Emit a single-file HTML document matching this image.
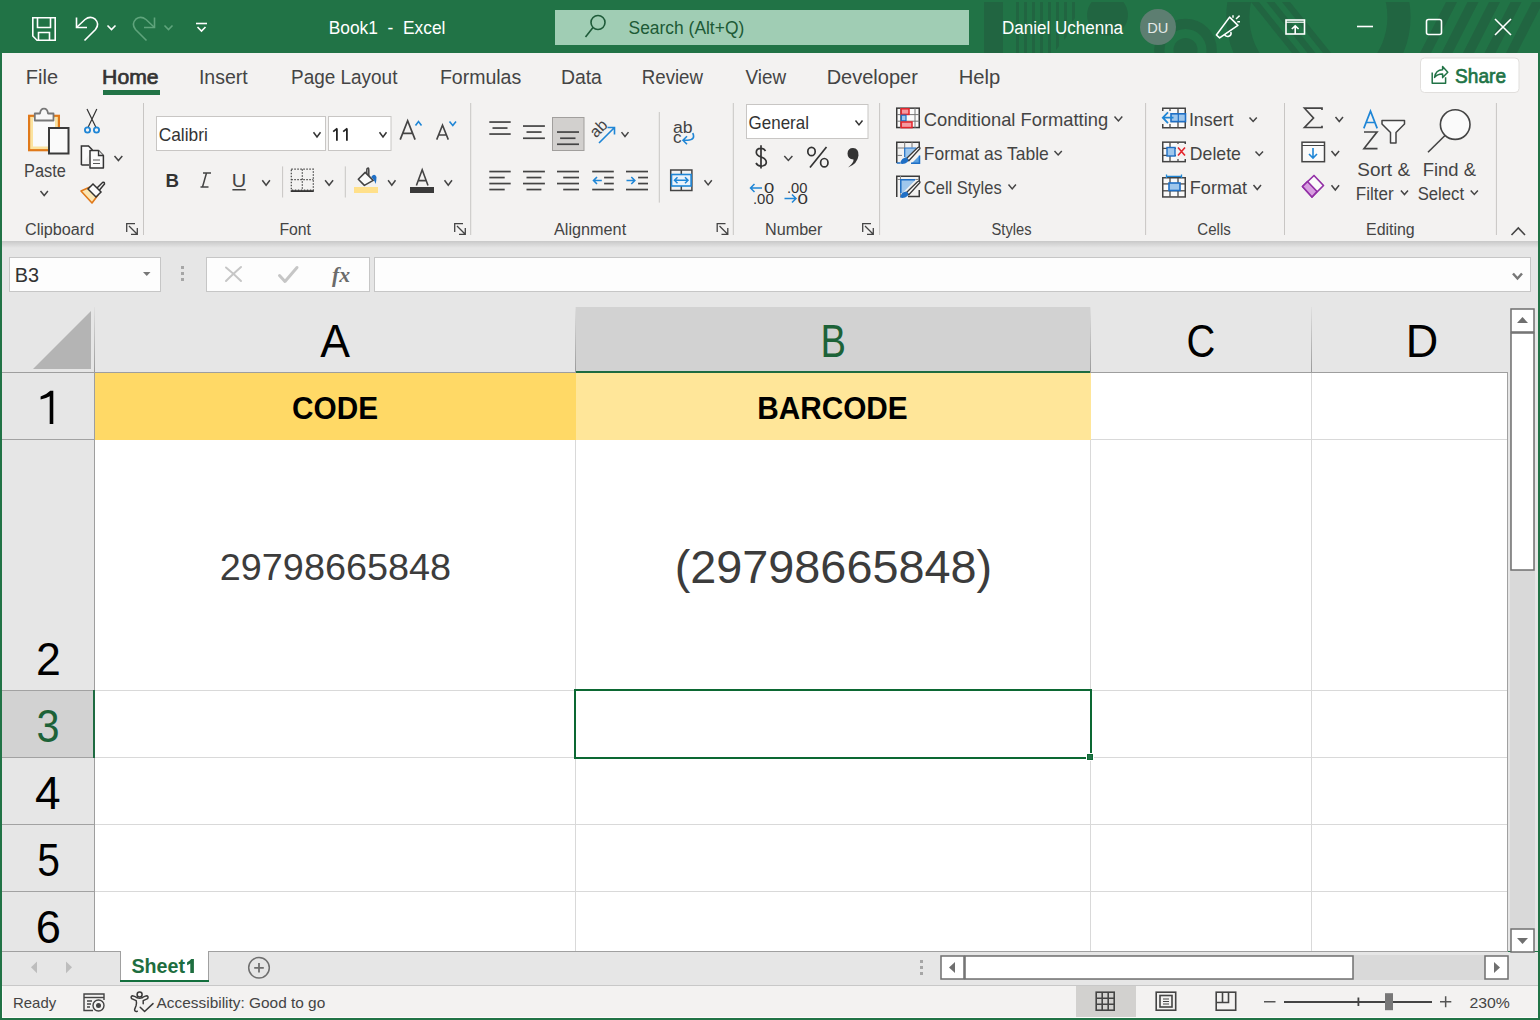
<!DOCTYPE html><html><head><meta charset="utf-8"><style>html,body{margin:0;padding:0;width:1540px;height:1020px;overflow:hidden;background:#217346}svg{display:block;font-family:"Liberation Sans",sans-serif}</style></head><body><svg width="1540" height="1020" viewBox="0 0 1540 1020"><rect x="0" y="0" width="1540" height="1020" fill="#217346"/>
<rect x="2" y="53" width="1536" height="188" fill="#f3f2f1"/>
<defs><linearGradient id="shd" x1="0" y1="0" x2="0" y2="1"><stop offset="0" stop-color="#c8c8c8"/><stop offset="1" stop-color="#e6e6e6"/></linearGradient><linearGradient id="hsep" x1="0" y1="0" x2="0" y2="1"><stop offset="0" stop-color="#e0e0e0"/><stop offset="1" stop-color="#9a9a9a"/></linearGradient></defs>
<rect x="2" y="241" width="1536" height="66" fill="#e6e6e6"/>
<rect x="2" y="241" width="1536" height="7" fill="url(#shd)"/>
<defs><clipPath id="tclip"><rect x="0" y="2" width="1540" height="51"/></clipPath><clipPath id="sclip"><circle cx="1318.4" cy="17" r="69"/></clipPath></defs>
<g fill="#216541" clip-path="url(#tclip)">
  <rect x="984" y="2" width="19" height="51"/>
  <rect x="1016" y="2" width="3" height="51"/><rect x="1024" y="2" width="3" height="51"/><rect x="1032" y="2" width="3" height="51"/><rect x="1040" y="2" width="3" height="51"/><rect x="1048" y="2" width="3" height="51"/><path d="M1056 2 H1059 V46 L1056 50 Z"/><path d="M1064 2 H1067 V36 L1064 40 Z"/><path d="M1072 2 H1075 V18 L1072 22 Z"/>
  <circle cx="1107.5" cy="15" r="20.5"/>
  <path fill-rule="evenodd" d="M1154.2 50 A31.3 31.3 0 1 1 1216.8 50 A31.3 31.3 0 1 1 1154.2 50 Z M1164.5 50 A21 21 0 1 0 1206.5 50 A21 21 0 1 0 1164.5 50 Z"/>
  <circle cx="1185.5" cy="50" r="12"/>
  <path fill-rule="evenodd" d="M1226.2 17 A92.2 92.2 0 1 1 1410.6 17 A92.2 92.2 0 1 1 1226.2 17 Z M1249.4 17 A69 69 0 1 0 1387.4 17 A69 69 0 1 0 1249.4 17 Z"/>
  <g clip-path="url(#sclip)"><path d="M1251 2 H1259 L1300 53 H1292 Z"/><path d="M1266.5 2 H1274.5 L1315.5 53 H1307.5 Z"/><path d="M1282 2 H1290 L1331 53 H1323 Z"/></g>
  <path d="M1446 2 H1457 L1431 53 H1420 Z"/><path d="M1467.5 2 H1478.5 L1452.5 53 H1441.5 Z"/><path d="M1489 2 H1500 L1474 53 H1463 Z"/><path d="M1510.5 2 H1521.5 L1495.5 53 H1484.5 Z"/><path d="M1532 2 H1543 L1517 53 H1506 Z"/>
 </g>
 <g fill="none" stroke="#fff" stroke-width="1.6">
  <path d="M32.8 17.8 H55.2 V40.2 H37 L32.8 36 Z"/>
  <path d="M37.5 17.8 V27.5 H50.5 V17.8"/>
  <path d="M38.5 40.2 V32.5 H49.5 V40.2"/>
  <path d="M76.5 17.5 V27.5 H87"/>
  <path d="M77 27 L85 19.5 Q90 15.5 95 19 Q100 24 95.5 29.5 L84.5 40.5"/>
  <path d="M107.5 25.5 L111.5 29.5 L115.5 25.5"/>
  <path d="M196 23.5 H207"/><path d="M197.5 27 L201.5 31 L205.5 27"/>
 </g>
 <g fill="none" stroke="#5fa47c" stroke-width="1.6">
  <path d="M154.5 17.5 V27.5 H144"/>
  <path d="M154 27 L146 19.5 Q141 15.5 136 19 Q131 24 135.5 29.5 L146.5 40.5"/>
  <path d="M164.5 25.5 L168.5 29.5 L172.5 25.5"/>
 </g>
 <rect x="555" y="10" width="414" height="35" fill="#a0cdb4"/>
 <g fill="none" stroke="#1e5a39" stroke-width="1.6">
  <circle cx="598" cy="22.5" r="7"/><path d="M593 27.5 L585.5 37"/>
 </g>
 <circle cx="1158" cy="27" r="18" fill="#5d7e71"/>
 <g fill="none" stroke="#fff" stroke-width="1.6">
  <path d="M1216.4 35 L1229.6 17.1 L1237.9 25.4 L1219.6 37.9 Z" stroke-linejoin="round"/>
  <path d="M1224.5 34.2 A3.2 3.2 0 0 0 1230.8 32" />
  <path d="M1233 15.2 V17.8 M1236 19 L1239.6 15.6 M1237.3 21.8 H1240" stroke-width="1.5"/>
  <rect x="1286" y="20" width="18.5" height="14"/>
  <path d="M1286 22.2 H1304.5" stroke-width="1.2"/><path d="M1295.2 34 V25.8 M1291.8 29 L1295.2 25.8 L1298.6 29"/>
  <path d="M1357 26.5 H1373"/>
  <rect x="1426.5" y="19.5" width="15" height="15" rx="2"/>
  <path d="M1495 19 L1511 35 M1511 19 L1495 35"/>
 </g>
<rect x="103" y="90" width="57" height="5" fill="#217346"/>
<rect x="1420.5" y="58" width="98.5" height="34.5" rx="4" fill="#ffffff" stroke="#e1dfdd" stroke-width="1"/>
<g fill="none" stroke="#217346" stroke-width="1.5" stroke-linejoin="round"><path d="M1432.2 72.6 V83.2 H1445.6 V77.3"/><path d="M1434.6 77.4 Q1435.5 70 1442.6 69.8 V66.4 L1447.8 72.2 L1442.6 77.6 V74 Q1437.5 73.8 1434.6 77.4 Z"/></g>
<rect x="29.1" y="115.8" width="29.8" height="34.4" fill="#fbe3a0" stroke="#e0791a" stroke-width="2.2"/>
<rect x="33" y="118" width="22" height="28.5" fill="#fafafa"/>
<path d="M34.8 120.5 V113.5 H40 Q40.5 108.6 44 108.6 Q47.5 108.6 48 113.5 H53.5 V120.5 Z" fill="#f7f7f7" stroke="#777" stroke-width="1.8" stroke-linejoin="round"/>
<rect x="49" y="128" width="19.5" height="25.5" fill="#fafafa" stroke="#3a3a3a" stroke-width="2"/>
<path d="M40.5 191.1 L44.2 195.5 L47.9 191.1" fill="none" stroke="#444" stroke-width="1.5"/>
<g fill="none" stroke="#333" stroke-width="1.2"><path d="M87 109 L96 127.5 M96.8 109 L88 127.5"/></g>
<g fill="none" stroke="#1f86d6" stroke-width="1.8"><circle cx="87.5" cy="130" r="2.6"/><circle cx="96.5" cy="130" r="2.6"/></g>
<path d="M81.4 165 V146 H88.5 L92.5 150" fill="#fafafa" stroke="#333" stroke-width="1.5"/>
<path d="M81.4 165 H89" fill="none" stroke="#333" stroke-width="1.5"/>
<path d="M90 168.1 V150.6 H98.5 L103.4 155.5 V168.1 Z" fill="#fafafa" stroke="#333" stroke-width="1.5" stroke-linejoin="round"/>
<path d="M98.5 150.6 V155.5 H103.4" fill="#e0e0e0" stroke="#333" stroke-width="1.3"/>
<path d="M93 160 H100 M93 163.5 H100" stroke="#555" stroke-width="1.1"/>
<path d="M114.5 156.1 L118.4 160.5 L122.3 156.1" fill="none" stroke="#444" stroke-width="1.5"/>
<path d="M81 191 L90 187 L98 195 L92 203 Z" fill="#fbe7b4" stroke="#e0791a" stroke-width="1.6" stroke-linejoin="round"/>
<path d="M88 189 L96 197 L101 192 L93 184 Z" fill="#fafafa" stroke="#333" stroke-width="1.5"/>
<path d="M97 188 L102.5 182.5 Q104.5 181.5 104.5 184 L99.5 190" fill="none" stroke="#333" stroke-width="1.5"/>
<g fill="none" stroke="#444" stroke-width="1.3"><path d="M126.7 232 V223.7 H135"/><path d="M129 226 L137 234 M131 234.3 H137.3 V228"/></g>
<rect x="143.0" y="103" width="1" height="132" fill="#c8c6c4"/>
<rect x="156.5" y="116.5" width="169" height="34" fill="#fff" stroke="#c8c6c4"/>
<path d="M313.5 132.2 L317.0 137.0 L320.5 132.2" fill="none" stroke="#333" stroke-width="1.5"/>
<rect x="328.5" y="116.5" width="62.5" height="34" fill="#fff" stroke="#c8c6c4"/>
<g fill="none" stroke="#222" stroke-width="1.8"><path d="M336.9 128.6 V140.8 M333.2 131.6 L337.3 128.4"/><path d="M346.9 128.6 V140.8 M343.2 131.6 L347.3 128.4"/></g>
<path d="M379.5 132.2 L383.0 137.0 L386.5 132.2" fill="none" stroke="#333" stroke-width="1.5"/>
<path d="M400.2 139.6 L407.65 120.8 L415.1 139.6 M402.6 133.4 H412.7" fill="none" stroke="#444" stroke-width="1.7"/>
<path d="M415.5 125.5 L418.5 121.5 L421.5 125.5" fill="none" stroke="#1f86d6" stroke-width="1.6"/>
<path d="M436.7 139.6 L442.5 125.2 L448.3 139.6 M438.8 135 H446.2" fill="none" stroke="#444" stroke-width="1.6"/>
<path d="M449.5 121.5 L452.8 125.5 L456 121.5" fill="none" stroke="#1f86d6" stroke-width="1.6"/>
<path d="M206.5 173 L202.5 187 M203 173 H211 M200.5 187 H208.5" fill="none" stroke="#444" stroke-width="1.5"/>
<rect x="232.4" y="189" width="13.3" height="1.5" fill="#444"/>
<path d="M262.3 180.2 L266.1 185.2 L269.9 180.2" fill="none" stroke="#444" stroke-width="1.5"/>
<rect x="282.1" y="166.4" width="1" height="31.099999999999994" fill="#c8c6c4"/>
<g fill="none" stroke="#444" stroke-width="1.2" stroke-dasharray="1.5 1.5"><rect x="291.3" y="169.2" width="22" height="21"/><path d="M302.3 169.2 V190.2 M291.3 179.7 H313.3"/></g>
<rect x="290.7" y="190.2" width="23.1" height="1.8" fill="#333"/>
<path d="M325.1 180.2 L329.1 185.2 L333.1 180.2" fill="none" stroke="#444" stroke-width="1.5"/>
<rect x="344.8" y="166.4" width="1" height="31.099999999999994" fill="#c8c6c4"/>
<path d="M358.3 179.3 L365.2 172.4 L373.2 180.4 L364.4 185.4 Z" fill="#fafafa" stroke="#444" stroke-width="1.6" stroke-linejoin="round"/>
<path d="M366.8 174 V170 Q366.8 168 368.5 168 Q368.8 168 368.8 170 V176" fill="none" stroke="#444" stroke-width="1.5"/>
<path d="M371.5 176.5 Q374.5 173 376.5 177 Q376.5 181 375.5 184 Q374.2 179 371.5 177.5 Z" fill="#1f6fc5"/>
<rect x="354" y="187" width="24" height="6" fill="#ffe08a"/>
<path d="M388.1 180.2 L391.8 185.2 L395.5 180.2" fill="none" stroke="#444" stroke-width="1.5"/>
<path d="M416.4 185.5 L422.2 169.7 L428 185.5 M418.5 180.6 H425.9" fill="none" stroke="#444" stroke-width="1.6"/>
<rect x="410" y="187" width="24" height="6" fill="#3a3a3a"/>
<path d="M444.5 180.2 L448.25 185.2 L452.0 180.2" fill="none" stroke="#444" stroke-width="1.5"/>
<g fill="none" stroke="#444" stroke-width="1.3"><path d="M454.7 232 V223.7 H463"/><path d="M457 226 L465 234 M459 234.3 H465.3 V228"/></g>
<rect x="470.2" y="103" width="1" height="132" fill="#c8c6c4"/>
<rect x="552.5" y="117.5" width="31.5" height="33" fill="#d2d0ce" stroke="#a19f9d"/>
<rect x="489.3" y="121.2" width="21.4" height="1.7" fill="#444"/>
<rect x="492.5" y="127.2" width="15.0" height="1.7" fill="#444"/>
<rect x="489.3" y="133.2" width="21.4" height="1.7" fill="#444"/>
<rect x="523.0" y="125.2" width="21.9" height="1.7" fill="#444"/>
<rect x="526.5" y="131.2" width="15.1" height="1.7" fill="#444"/>
<rect x="523.0" y="137.39999999999998" width="21.9" height="1.7" fill="#444"/>
<rect x="557.0" y="131.2" width="22.0" height="1.7" fill="#444"/>
<rect x="560.1" y="137.39999999999998" width="15.4" height="1.7" fill="#444"/>
<rect x="557.0" y="143.39999999999998" width="22.0" height="1.7" fill="#444"/>
<rect x="489.3" y="170.7" width="21.4" height="1.7" fill="#444"/>
<rect x="489.3" y="176.7" width="15.4" height="1.7" fill="#444"/>
<rect x="489.3" y="182.7" width="21.4" height="1.7" fill="#444"/>
<rect x="489.3" y="188.7" width="15.4" height="1.7" fill="#444"/>
<rect x="523.0" y="170.7" width="21.9" height="1.7" fill="#444"/>
<rect x="526.5" y="176.7" width="14.9" height="1.7" fill="#444"/>
<rect x="523.0" y="182.7" width="21.9" height="1.7" fill="#444"/>
<rect x="526.5" y="188.7" width="14.9" height="1.7" fill="#444"/>
<rect x="557.0" y="170.7" width="22.0" height="1.7" fill="#444"/>
<rect x="563.2" y="176.7" width="15.8" height="1.7" fill="#444"/>
<rect x="557.0" y="182.7" width="22.0" height="1.7" fill="#444"/>
<rect x="563.2" y="188.7" width="15.8" height="1.7" fill="#444"/>
<rect x="592.2" y="170.7" width="21.6" height="1.7" fill="#444"/>
<rect x="604.1" y="176.7" width="9.7" height="1.7" fill="#444"/>
<rect x="604.1" y="182.7" width="9.7" height="1.7" fill="#444"/>
<rect x="592.2" y="188.7" width="21.6" height="1.7" fill="#444"/>
<rect x="626.0" y="170.7" width="22.0" height="1.7" fill="#444"/>
<rect x="638.1" y="176.7" width="9.9" height="1.7" fill="#444"/>
<rect x="638.1" y="182.7" width="9.9" height="1.7" fill="#444"/>
<rect x="626.0" y="188.7" width="22.0" height="1.7" fill="#444"/>
<g fill="none" stroke="#1f86d6" stroke-width="1.6"><path d="M601.8 180.5 H593.5 M597 177 L593.5 180.5 L597 184"/><path d="M626.5 180.5 H634.8 M631.3 177 L634.8 180.5 L631.3 184"/></g>
<text x="0" y="0" font-size="16" fill="#444" transform="translate(596 138.5) rotate(-45)">ab</text>
<g fill="none" stroke="#1f86d6" stroke-width="1.6"><path d="M599 143 L614 128 M607.5 127.5 H614.5 V134.5"/></g>
<path d="M621.5 132.1 L625.0 136.5 L628.5 132.1" fill="none" stroke="#444" stroke-width="1.5"/>
<rect x="658.8" y="112" width="1" height="90.6" fill="#c8c6c4"/>
<g fill="none" stroke="#1f86d6" stroke-width="1.6"><path d="M692.8 133 Q695.8 140 687.5 140.2 H683 M687 136.2 L683 140.2 L687 144.2"/></g>
<g fill="none" stroke="#444" stroke-width="1.5"><rect x="670.7" y="170" width="21.2" height="20.5"/><path d="M681.3 170 V175 M681.3 186 V190.5"/></g>
<rect x="671.5" y="174.5" width="19.6" height="11.5" fill="#eaf3fb" stroke="#1f86d6" stroke-width="1.6"/>
<g fill="none" stroke="#1f86d6" stroke-width="1.5"><path d="M674.5 180.2 H688 M677.5 177.2 L674.5 180.2 L677.5 183.2 M685 177.2 L688 180.2 L685 183.2"/></g>
<path d="M704.5 180.3 L708.15 184.9 L711.8 180.3" fill="none" stroke="#444" stroke-width="1.5"/>
<g fill="none" stroke="#444" stroke-width="1.3"><path d="M717.2 232 V223.7 H725.5"/><path d="M719.5 226 L727.5 234 M721.5 234.3 H727.8 V228"/></g>
<rect x="732.8" y="103" width="1" height="132" fill="#c8c6c4"/>
<rect x="746.5" y="104.5" width="121.5" height="34" fill="#fff" stroke="#c8c6c4"/>
<path d="M855.5 120.5 L859.0 124.9 L862.5 120.5" fill="none" stroke="#333" stroke-width="1.5"/>
<path d="M765.5 151 Q764 148.3 760.8 148.3 Q756.3 148.3 756.3 152.3 Q756.3 155.5 761 157 Q766.3 158.7 766.3 162.3 Q766.3 166 761 166 Q757.5 166 756 163 M761 145.3 V168.6" fill="none" stroke="#333" stroke-width="1.7"/>
<path d="M784.3 156.1 L788.3499999999999 160.5 L792.4 156.1" fill="none" stroke="#444" stroke-width="1.5"/>
<g fill="none" stroke="#333" stroke-width="1.7"><ellipse cx="811.5" cy="151.5" rx="3.7" ry="4.2"/><ellipse cx="824.3" cy="162.7" rx="3.7" ry="4.2"/><path d="M826.5 147 L810 167.5"/></g>
<path d="M853 148 Q858.8 148 858.5 155.5 Q857.5 164 848 167.5 Q854 162.5 853.5 159.5 Q847.5 159 847.5 153.5 Q847.8 148 853 148 Z" fill="#333"/>
<g fill="none" stroke="#1f86d6" stroke-width="1.5"><path d="M750.5 188 H762 M754.5 184 L750.5 188 L754.5 192"/></g>
<g fill="none" stroke="#1f86d6" stroke-width="1.5"><path d="M784.5 198.5 H796 M792 194.5 L796 198.5 L792 202.5"/></g>
<g fill="none" stroke="#444" stroke-width="1.3"><path d="M862.7 232 V223.7 H871"/><path d="M865 226 L873 234 M867 234.3 H873.3 V228"/></g>
<rect x="879.1" y="103" width="1" height="132" fill="#c8c6c4"/>
<rect x="896.75" y="108.15" width="22.5" height="19.4" fill="#fafafa" stroke="#3a3a3a" stroke-width="1.5"/>
<path d="M900.5 108 V128 M915 108 V128 M897 114.6 H919.5 M897 121.2 H919.5" stroke="#777" stroke-width="1"/>
<rect x="901.2" y="108.8" width="7.8" height="5.6" fill="#f59aa0" stroke="#e3242b" stroke-width="1.5"/>
<rect x="901.4" y="115.2" width="4.6" height="5.6" fill="#9fc7ec" stroke="#1f6fc5" stroke-width="1.2"/>
<rect x="901.2" y="122" width="10.8" height="5.6" fill="#f59aa0" stroke="#e3242b" stroke-width="1.5"/>
<path d="M1114.5 116.5 L1118.4 120.9 L1122.3 116.5" fill="none" stroke="#444" stroke-width="1.5"/>
<path d="M896.75 163 V142.25 H919.25 V147" fill="none" stroke="#3a3a3a" stroke-width="1.5"/>
<path d="M904.7 142 V149 M912 142 V147.5 M897 148 H904.7 M897 155.4 H902" stroke="#777" stroke-width="1"/>
<path d="M904.7 148 H917 L905 160 V163 H904.7 Z" fill="#9fc7ec"/>
<path d="M912 163 L919.5 155.5 V163 Z" fill="#5aa0e0"/>
<path d="M904.7 148 H916 M904.7 148 V157" stroke="#1f6fc5" stroke-width="1.2"/>
<path d="M896.75 163 H900 M919.5 155.5 V163.2 H911" fill="none" stroke="#1f6fc5" stroke-width="1.5"/>
<g transform="translate(0 0)"><path d="M906.5 158.5 L917.5 147.8 Q919.8 146.2 920 148.5 L908.8 160.8 Z" fill="#fafafa" stroke="#3a3a3a" stroke-width="1.3" stroke-linejoin="round"/><path d="M900 163.6 Q901.5 157.5 906.2 157.4 Q909.5 159.5 907.5 162 Q904.5 164.6 900 163.6 Z" fill="#1f6fc5"/></g>
<path d="M1054.5 151.0 L1058.15 155.0 L1061.8 151.0" fill="none" stroke="#444" stroke-width="1.5"/>
<path d="M896.75 197 V176.15 H919.25 V181 M919.25 190 V196.55 H908" fill="none" stroke="#3a3a3a" stroke-width="1.5"/>
<path d="M900.5 176 V197 M897 179.5 H919" stroke="#888" stroke-width="1"/>
<path d="M900.5 179.5 H916 L902 193.5 H900.5 Z" fill="#9fc7ec"/>
<path d="M900.8 193 V179.8 H915" fill="none" stroke="#1f6fc5" stroke-width="1.5"/>
<g transform="translate(0 34)"><path d="M906.5 158.5 L917.5 147.8 Q919.8 146.2 920 148.5 L908.8 160.8 Z" fill="#fafafa" stroke="#3a3a3a" stroke-width="1.3" stroke-linejoin="round"/><path d="M900 163.6 Q901.5 157.5 906.2 157.4 Q909.5 159.5 907.5 162 Q904.5 164.6 900 163.6 Z" fill="#1f6fc5"/></g>
<path d="M1008.5 184.5 L1012.2 188.9 L1015.9 184.5" fill="none" stroke="#444" stroke-width="1.5"/>
<rect x="1145.1" y="103" width="1" height="132" fill="#c8c6c4"/>
<rect x="1162.75" y="108.25" width="22.5" height="19.5" fill="#fafafa" stroke="#444" stroke-width="1.5"/>
<path d="M1170.0 108.5 V127.5" stroke="#4a4a4a" stroke-width="1.3"/>
<path d="M1163 114.5 H1185" stroke="#4a4a4a" stroke-width="1.3"/>
<path d="M1178.0 108.5 V127.5" stroke="#4a4a4a" stroke-width="1.3"/>
<path d="M1163 121.5 H1185" stroke="#4a4a4a" stroke-width="1.3"/>
<rect x="1161" y="111" width="10" height="13" fill="#f3f2f1"/>
<rect x="1171" y="113.8" width="14.5" height="7.8" fill="#9fc7ec" stroke="#1f6fc5" stroke-width="1.6"/>
<path d="M1178.3 113.8 V121.6" stroke="#1f6fc5" stroke-width="1.2"/>
<g fill="none" stroke="#1f86d6" stroke-width="1.8"><path d="M1173.5 117.7 H1163 M1168 112.3 L1162.8 117.7 L1168 123.1"/></g>
<path d="M1249.5 117.5 L1253.15 121.5 L1256.8 117.5" fill="none" stroke="#444" stroke-width="1.5"/>
<rect x="1162.75" y="142.15" width="22.5" height="19.5" fill="#fafafa" stroke="#444" stroke-width="1.5"/>
<path d="M1170.0 142.4 V161.4" stroke="#4a4a4a" stroke-width="1.3"/>
<path d="M1163 148.4 H1185" stroke="#4a4a4a" stroke-width="1.3"/>
<path d="M1178.0 142.4 V161.4" stroke="#4a4a4a" stroke-width="1.3"/>
<path d="M1163 155.4 H1185" stroke="#4a4a4a" stroke-width="1.3"/>
<rect x="1167" y="147.5" width="8" height="8.5" fill="#9fc7ec" stroke="#1f6fc5" stroke-width="1.4"/>
<rect x="1176" y="144" width="10" height="15" fill="#f3f2f1"/>
<g fill="none" stroke="#e3242b" stroke-width="1.6"><path d="M1178 147.5 L1185 155.5 M1185 147.5 L1178 155.5"/></g>
<path d="M1255.5 151.5 L1259.25 155.5 L1263.0 151.5" fill="none" stroke="#444" stroke-width="1.5"/>
<rect x="1162.75" y="177.75" width="22.5" height="19.2" fill="#fafafa" stroke="#444" stroke-width="1.5"/>
<path d="M1170.0 178 V196.7" stroke="#4a4a4a" stroke-width="1.3"/>
<path d="M1163 183.9 H1185" stroke="#4a4a4a" stroke-width="1.3"/>
<path d="M1178.0 178 V196.7" stroke="#4a4a4a" stroke-width="1.3"/>
<path d="M1163 190.8 H1185" stroke="#4a4a4a" stroke-width="1.3"/>
<rect x="1169" y="183" width="11" height="7.5" fill="#9fc7ec" stroke="#1f6fc5" stroke-width="1.6"/>
<g fill="none" stroke="#1f86d6" stroke-width="1.3"><path d="M1166.5 174.5 V178 M1181.5 174.5 V178 M1166.5 176.3 H1181.5"/></g>
<path d="M1253.5 185.0 L1257.25 189.5 L1261.0 185.0" fill="none" stroke="#444" stroke-width="1.5"/>
<rect x="1284.0" y="103" width="1" height="132" fill="#c8c6c4"/>
<path d="M1322 110 V108.2 H1304.5 L1313.5 118 L1304.5 127.5 H1322 V125.8" fill="none" stroke="#444" stroke-width="1.7"/>
<path d="M1335.5 117.0 L1339.25 121.5 L1343.0 117.0" fill="none" stroke="#444" stroke-width="1.5"/>
<rect x="1302" y="142.2" width="22.5" height="19.5" fill="#fafafa" stroke="#444" stroke-width="1.5"/>
<path d="M1302 145.5 H1324.5" stroke="#444" stroke-width="1"/>
<g fill="none" stroke="#1f86d6" stroke-width="1.6"><path d="M1313 148 V158 M1309 154 L1313 158 L1317 154"/></g>
<path d="M1331.5 150.9 L1335.3 155.5 L1339.1 150.9" fill="none" stroke="#444" stroke-width="1.5"/>
<path d="M1302.5 186.5 L1314 175.5 L1323.5 185.5 L1312 197 Z" fill="#fafafa" stroke="#922fa6" stroke-width="1.7" stroke-linejoin="round"/>
<path d="M1302.5 186.5 L1307.5 181.5 L1317 191.5 L1312 197 Z" fill="#d79ee0" stroke="#922fa6" stroke-width="1.7" stroke-linejoin="round"/>
<path d="M1331.5 185.3 L1335.3 190.0 L1339.1 185.3" fill="none" stroke="#444" stroke-width="1.5"/>
<path d="M1363.8 128.4 L1370.5 111.2 L1377.2 128.4 M1366 122.5 H1375" fill="none" stroke="#1f86d6" stroke-width="1.7"/>
<path d="M1364 132 H1377 L1364 148.6 H1377.5" fill="none" stroke="#444" stroke-width="1.7"/>
<path d="M1382 120.5 H1404.5 V124 L1396 132.5 V143 H1390.5 V132.5 L1382 124 Z" fill="#fafafa" stroke="#444" stroke-width="1.5" stroke-linejoin="round"/>
<path d="M1400.9 190.5 L1404.45 194.5 L1408.0 190.5" fill="none" stroke="#444" stroke-width="1.5"/>
<circle cx="1455.2" cy="124.6" r="14.8" fill="#fafafa" stroke="#444" stroke-width="1.6"/>
<path d="M1445 135.5 L1428 152.3" stroke="#444" stroke-width="1.6"/>
<path d="M1470.7 190.5 L1474.3000000000002 194.5 L1477.9 190.5" fill="none" stroke="#444" stroke-width="1.5"/>
<rect x="1495.9" y="103" width="1" height="132" fill="#c8c6c4"/>
<path d="M1511.5 235 L1518.3 228 L1525 235" fill="none" stroke="#444" stroke-width="1.6"/>
<rect x="9.5" y="257.5" width="151" height="34" fill="#fdfdfd" stroke="#c6c6c6"/>
<path d="M143 272 H150.5 L146.75 276 Z" fill="#777"/>
<g fill="#a6a6a6"><rect x="181" y="266" width="3" height="3"/><rect x="181" y="272" width="3" height="3"/><rect x="181" y="278" width="3" height="3"/></g>
<rect x="206.5" y="257.5" width="163" height="34" fill="#fdfdfd" stroke="#c6c6c6"/>
<g fill="none" stroke="#c6c6c6" stroke-width="2" stroke-linecap="round"><path d="M226 267.5 Q234 274 241 281 M241 267 Q232 275 226 281"/></g>
<path d="M279.5 275.5 L285 281.5 L297 267.5" fill="none" stroke="#c6c6c6" stroke-width="3" stroke-linejoin="round" stroke-linecap="round"/>
<text x="332" y="281.5" font-family="Liberation Serif" font-style="italic" font-weight="bold" font-size="20" fill="#6b6b6b" textLength="18" lengthAdjust="spacingAndGlyphs">fx</text>
<rect x="374.5" y="257.5" width="1156" height="34" fill="#fdfdfd" stroke="#c6c6c6"/>
<path d="M1513 273.5 L1517.5 278.5 L1522 273.5" fill="none" stroke="#777" stroke-width="2.5"/>
<rect x="2" y="307" width="1536" height="644" fill="#e6e6e6"/>
<rect x="95" y="373" width="1412" height="578" fill="#ffffff"/>
<path d="M91 311 V369 H33 Z" fill="#b4b4b4"/>
<rect x="576" y="307" width="514" height="65" fill="#d2d2d2"/>
<rect x="94" y="307" width="1" height="65" fill="url(#hsep)"/>
<rect x="575" y="307" width="1" height="65" fill="url(#hsep)"/>
<rect x="1090" y="307" width="1" height="65" fill="url(#hsep)"/>
<rect x="1311" y="307" width="1" height="65" fill="url(#hsep)"/>
<rect x="2" y="372" width="1505" height="1" fill="#9e9e9e"/>
<rect x="576" y="371" width="514" height="2" fill="#1e6b41"/>
<rect x="94" y="372" width="1" height="579" fill="#9e9e9e"/>
<rect x="2" y="690" width="92" height="67" fill="#d2d2d2"/>
<rect x="2" y="439" width="92" height="1" fill="#a2a2a2"/>
<rect x="2" y="690" width="92" height="1" fill="#a2a2a2"/>
<rect x="2" y="757" width="92" height="1" fill="#a2a2a2"/>
<rect x="2" y="824" width="92" height="1" fill="#a2a2a2"/>
<rect x="2" y="891" width="92" height="1" fill="#a2a2a2"/>
<rect x="93" y="690" width="2" height="68" fill="#1e6b41"/>
<rect x="95" y="439" width="1412" height="1" fill="#d9d9d9"/>
<rect x="95" y="690" width="1412" height="1" fill="#d9d9d9"/>
<rect x="95" y="757" width="1412" height="1" fill="#d9d9d9"/>
<rect x="95" y="824" width="1412" height="1" fill="#d9d9d9"/>
<rect x="95" y="891" width="1412" height="1" fill="#d9d9d9"/>
<rect x="575" y="373" width="1" height="578" fill="#d9d9d9"/>
<rect x="1090" y="373" width="1" height="578" fill="#d9d9d9"/>
<rect x="1311" y="373" width="1" height="578" fill="#d9d9d9"/>
<rect x="95" y="373" width="481" height="67" fill="#ffd966"/>
<rect x="576" y="373" width="515" height="67" fill="#ffe699"/>
<rect x="1507" y="372" width="1" height="580" fill="#a0a0a0"/>
<rect x="2" y="951" width="1506" height="1" fill="#a0a0a0"/>
<rect x="575" y="690" width="516" height="68" fill="none" stroke="#0c6833" stroke-width="2"/>
<rect x="1086" y="753" width="8" height="8" fill="#ffffff"/>
<rect x="1087.5" y="754.5" width="5" height="5" fill="#217346" stroke="#0c6833" stroke-width="1"/>
<path d="M53.3 390.8 V424 H49.7 V396.2 Q45.5 398.6 40.6 399.6 V396.6 Q46.5 394.6 50.3 390.8 Z" fill="#000"/>
<rect x="2" y="952" width="1536" height="33" fill="#e6e6e6"/>
<path d="M37 961.5 V973.2 L31 967.35 Z" fill="#bdbdbd"/>
<path d="M66 961.5 V973.2 L72 967.35 Z" fill="#bdbdbd"/>
<rect x="120" y="951" width="88.5" height="29" fill="#ffffff"/>
<rect x="120" y="951" width="1" height="30" fill="#a0a0a0"/><rect x="208" y="951" width="1" height="30" fill="#a0a0a0"/>
<rect x="120" y="980" width="89" height="2" fill="#136f3d"/>
<path d="M193.9 959 V972.9 H190.3 V963.6 Q188.8 964.6 187.1 965.2 V962.2 Q189.8 961 191.2 959 Z" fill="#1e6e40"/>
<circle cx="259" cy="967.8" r="10.3" fill="none" stroke="#6f6f6f" stroke-width="1.5"/>
<path d="M259 963 V972.6 M254.2 967.8 H263.8" stroke="#6f6f6f" stroke-width="1.8"/>
<g fill="#a6a6a6"><rect x="920" y="960" width="3" height="3"/><rect x="920" y="966" width="3" height="3"/><rect x="920" y="972" width="3" height="3"/></g>
<rect x="964" y="955" width="521" height="25" fill="#d9d9d9"/>
<rect x="941" y="956" width="23" height="23" fill="#fff" stroke="#6f6f6f" stroke-width="1.5"/>
<path d="M955 962 V973 L949 967.5 Z" fill="#6f6f6f"/>
<rect x="965" y="956" width="388" height="23" fill="#fff" stroke="#6f6f6f" stroke-width="1.5"/>
<rect x="1485" y="956" width="23" height="23" fill="#fff" stroke="#6f6f6f" stroke-width="1.5"/>
<path d="M1494 962 V973 L1500 967.5 Z" fill="#6f6f6f"/>
<rect x="1510" y="333" width="25" height="595" fill="#d9d9d9"/>
<rect x="1511" y="309" width="23" height="23" fill="#fff" stroke="#6f6f6f" stroke-width="1.5"/>
<path d="M1517 323 H1528 L1522.5 317 Z" fill="#6f6f6f"/>
<rect x="1511" y="333" width="23" height="237" fill="#fff" stroke="#6f6f6f" stroke-width="1.5"/>
<rect x="1511" y="929" width="23" height="23" fill="#fff" stroke="#6f6f6f" stroke-width="1.5"/>
<path d="M1517 938 H1528 L1522.5 944 Z" fill="#6f6f6f"/>
<rect x="2" y="985" width="1536" height="33" fill="#f3f2f1"/>
<rect x="2" y="1017" width="1536" height="1" fill="#fdfbfb"/><rect x="2" y="986" width="1" height="31" fill="#fdfbfb"/>
<rect x="2" y="985" width="1536" height="1" fill="#c8c8c8"/>
<g fill="none" stroke="#444" stroke-width="1.4"><path d="M93 1010.5 H84 V994 H104 V1000"/><path d="M84 997.5 H104"/><path d="M87 1001 H92 M87 1004 H91 M87 1007 H90"/><circle cx="98.5" cy="1005.5" r="5.5"/></g><circle cx="98.5" cy="1005.5" r="2.5" fill="#444"/>
<g fill="none" stroke="#3a3a3a" stroke-width="1.5" stroke-linecap="round" stroke-linejoin="round"><circle cx="139.6" cy="994.4" r="2.5"/><path d="M137 997.6 Q134.5 996.2 132.3 995.8 Q130.4 996.6 131.6 998.6 L136.2 1000.6 Q136.9 1003.2 136.1 1005.6 L134.6 1009.6 Q134.6 1012 137.3 1011.2"/><path d="M142.2 997.6 Q144.7 996.2 146.9 995.8 Q148.8 996.6 147.6 998.6 L143.2 1000.6 V1003.8"/><path d="M137 997.6 Q139.6 998.8 142.2 997.6"/><path d="M140.2 1007.2 L144.6 1011.5 L153 1003.6"/></g>
<rect x="1076" y="986" width="60" height="31" fill="#d2d1cf"/>
<g fill="none" stroke="#444" stroke-width="1.6"><rect x="1096.2" y="992.2" width="18" height="18"/><path d="M1102.2 992.2 V1010.2 M1108.2 992.2 V1010.2 M1096.2 998.2 H1114.2 M1096.2 1004.2 H1114.2"/></g>
<g fill="none" stroke="#444" stroke-width="1.6"><rect x="1156.2" y="992.2" width="19.5" height="18"/><rect x="1160" y="995.5" width="12" height="11.5"/><path d="M1163 999 H1169 M1163 1001.5 H1169 M1163 1004 H1169" stroke-width="1.2"/></g>
<g fill="none" stroke="#444" stroke-width="1.6"><rect x="1216.2" y="992.2" width="19.5" height="18"/><path d="M1216.2 1002.5 H1228.5 V992.2 M1222.5 992.2 V1002.5"/></g>
<rect x="1264" y="1001" width="11.5" height="1.5" fill="#555"/>
<rect x="1284" y="1001" width="148" height="2" fill="#444"/>
<rect x="1357.5" y="997.5" width="1.8" height="8.5" fill="#444"/>
<rect x="1385" y="993.2" width="8" height="17" fill="#777"/>
<path d="M1440 1001.7 H1451.3 M1445.65 996.3 V1007.2" stroke="#555" stroke-width="1.5"/>
<text x="328.69" y="34.00" font-size="19" font-weight="400" fill="#ffffff" textLength="116.73" lengthAdjust="spacingAndGlyphs" xml:space="preserve">Book1  -  Excel</text>
<text x="628.57" y="33.80" font-size="18.7" font-weight="400" fill="#1d5a36" textLength="115.67" lengthAdjust="spacingAndGlyphs" xml:space="preserve">Search (Alt+Q)</text>
<text x="1002.06" y="33.80" font-size="18" font-weight="400" fill="#ffffff" textLength="121.03" lengthAdjust="spacingAndGlyphs" xml:space="preserve">Daniel Uchenna</text>
<text x="1147.23" y="32.70" font-size="15" font-weight="400" fill="#e3e9e6" textLength="21.13" lengthAdjust="spacingAndGlyphs" xml:space="preserve">DU</text>
<text x="25.85" y="84.20" font-size="20.5" font-weight="400" fill="#444444" textLength="32.17" lengthAdjust="spacingAndGlyphs" xml:space="preserve">File</text>
<text x="102.14" y="84.20" font-size="20.5" font-weight="400" fill="#333" stroke="#333" stroke-width="0.7" textLength="56.37" lengthAdjust="spacingAndGlyphs" xml:space="preserve">Home</text>
<text x="198.89" y="84.20" font-size="20.5" font-weight="400" fill="#444444" textLength="48.87" lengthAdjust="spacingAndGlyphs" xml:space="preserve">Insert</text>
<text x="291.05" y="84.20" font-size="20.5" font-weight="400" fill="#444444" textLength="106.36" lengthAdjust="spacingAndGlyphs" xml:space="preserve">Page Layout</text>
<text x="439.90" y="84.20" font-size="20.5" font-weight="400" fill="#444444" textLength="81.32" lengthAdjust="spacingAndGlyphs" xml:space="preserve">Formulas</text>
<text x="560.90" y="84.20" font-size="20.5" font-weight="400" fill="#444444" textLength="41.04" lengthAdjust="spacingAndGlyphs" xml:space="preserve">Data</text>
<text x="641.78" y="84.20" font-size="20.5" font-weight="400" fill="#444444" textLength="61.22" lengthAdjust="spacingAndGlyphs" xml:space="preserve">Review</text>
<text x="745.50" y="84.20" font-size="20.5" font-weight="400" fill="#444444" textLength="40.57" lengthAdjust="spacingAndGlyphs" xml:space="preserve">View</text>
<text x="826.65" y="84.20" font-size="20.5" font-weight="400" fill="#444444" textLength="91.19" lengthAdjust="spacingAndGlyphs" xml:space="preserve">Developer</text>
<text x="958.63" y="84.20" font-size="20.5" font-weight="400" fill="#444444" textLength="41.54" lengthAdjust="spacingAndGlyphs" xml:space="preserve">Help</text>
<text x="1455.09" y="82.90" font-size="21" font-weight="400" fill="#217346" stroke="#217346" stroke-width="0.7" textLength="50.96" lengthAdjust="spacingAndGlyphs" xml:space="preserve">Share</text>
<text x="24.09" y="176.60" font-size="18" font-weight="400" fill="#444444" textLength="41.85" lengthAdjust="spacingAndGlyphs" xml:space="preserve">Paste</text>
<text x="24.99" y="234.50" font-size="16" font-weight="400" fill="#444444" textLength="69.20" lengthAdjust="spacingAndGlyphs" xml:space="preserve">Clipboard</text>
<text x="158.69" y="140.70" font-size="19" font-weight="400" fill="#333" textLength="49.20" lengthAdjust="spacingAndGlyphs" xml:space="preserve">Calibri</text>
<text x="165.42" y="186.80" font-size="19" font-weight="700" fill="#333" textLength="13.51" lengthAdjust="spacingAndGlyphs" xml:space="preserve">B</text>
<text x="231.89" y="186.50" font-size="18" font-weight="400" fill="#444444" textLength="14.42" lengthAdjust="spacingAndGlyphs" xml:space="preserve">U</text>
<text x="279.41" y="234.60" font-size="16" font-weight="400" fill="#444444" textLength="31.60" lengthAdjust="spacingAndGlyphs" xml:space="preserve">Font</text>
<text x="672.90" y="133.20" font-size="16" font-weight="400" fill="#444444" textLength="19.58" lengthAdjust="spacingAndGlyphs" xml:space="preserve">ab</text>
<text x="672.93" y="143.40" font-size="16" font-weight="400" fill="#444444" textLength="8.57" lengthAdjust="spacingAndGlyphs" xml:space="preserve">c</text>
<text x="554.00" y="235.00" font-size="16" font-weight="400" fill="#444444" textLength="72.16" lengthAdjust="spacingAndGlyphs" xml:space="preserve">Alignment</text>
<text x="748.61" y="129.00" font-size="19" font-weight="400" fill="#333" textLength="60.33" lengthAdjust="spacingAndGlyphs" xml:space="preserve">General</text>
<text x="752.93" y="204.30" font-size="14" font-weight="400" fill="#333" textLength="20.77" lengthAdjust="spacingAndGlyphs" xml:space="preserve">.00</text>
<text x="764.00" y="193.00" font-size="14" font-weight="400" fill="#333" textLength="10.25" lengthAdjust="spacingAndGlyphs" xml:space="preserve">0</text>
<text x="786.95" y="193.00" font-size="14" font-weight="400" fill="#333" textLength="20.44" lengthAdjust="spacingAndGlyphs" xml:space="preserve">.00</text>
<text x="797.50" y="204.30" font-size="14" font-weight="400" fill="#333" textLength="10.47" lengthAdjust="spacingAndGlyphs" xml:space="preserve">0</text>
<text x="764.99" y="234.50" font-size="16" font-weight="400" fill="#444444" textLength="57.52" lengthAdjust="spacingAndGlyphs" xml:space="preserve">Number</text>
<text x="923.74" y="126.30" font-size="19" font-weight="400" fill="#444444" textLength="184.38" lengthAdjust="spacingAndGlyphs" xml:space="preserve">Conditional Formatting</text>
<text x="923.78" y="160.00" font-size="19" font-weight="400" fill="#444444" textLength="125.04" lengthAdjust="spacingAndGlyphs" xml:space="preserve">Format as Table</text>
<text x="923.83" y="193.80" font-size="19" font-weight="400" fill="#444444" textLength="77.82" lengthAdjust="spacingAndGlyphs" xml:space="preserve">Cell Styles</text>
<text x="991.58" y="235.00" font-size="16" font-weight="400" fill="#444444" textLength="39.95" lengthAdjust="spacingAndGlyphs" xml:space="preserve">Styles</text>
<text x="1188.92" y="126.00" font-size="19" font-weight="400" fill="#444444" textLength="44.64" lengthAdjust="spacingAndGlyphs" xml:space="preserve">Insert</text>
<text x="1189.87" y="160.00" font-size="19" font-weight="400" fill="#444444" textLength="50.98" lengthAdjust="spacingAndGlyphs" xml:space="preserve">Delete</text>
<text x="1189.85" y="194.00" font-size="19" font-weight="400" fill="#444444" textLength="57.13" lengthAdjust="spacingAndGlyphs" xml:space="preserve">Format</text>
<text x="1197.36" y="235.00" font-size="16" font-weight="400" fill="#444444" textLength="33.47" lengthAdjust="spacingAndGlyphs" xml:space="preserve">Cells</text>
<text x="1357.35" y="176.20" font-size="18" font-weight="400" fill="#444444" textLength="52.69" lengthAdjust="spacingAndGlyphs" xml:space="preserve">Sort &amp;</text>
<text x="1355.85" y="200.00" font-size="18" font-weight="400" fill="#444444" textLength="37.85" lengthAdjust="spacingAndGlyphs" xml:space="preserve">Filter</text>
<text x="1422.78" y="176.20" font-size="18" font-weight="400" fill="#444444" textLength="53.26" lengthAdjust="spacingAndGlyphs" xml:space="preserve">Find &amp;</text>
<text x="1417.67" y="200.00" font-size="18" font-weight="400" fill="#444444" textLength="46.36" lengthAdjust="spacingAndGlyphs" xml:space="preserve">Select</text>
<text x="1366.00" y="235.00" font-size="16" font-weight="400" fill="#444444" textLength="48.71" lengthAdjust="spacingAndGlyphs" xml:space="preserve">Editing</text>
<text x="14.86" y="281.80" font-size="19.5" font-weight="400" fill="#333" textLength="24.31" lengthAdjust="spacingAndGlyphs" xml:space="preserve">B3</text>
<text x="320.30" y="357.00" font-size="47" font-weight="400" fill="#000" textLength="29.74" lengthAdjust="spacingAndGlyphs" xml:space="preserve">A</text>
<text x="820.55" y="357.00" font-size="47" font-weight="400" fill="#1d6238" textLength="25.46" lengthAdjust="spacingAndGlyphs" xml:space="preserve">B</text>
<text x="1186.51" y="357.00" font-size="47" font-weight="400" fill="#000" textLength="28.75" lengthAdjust="spacingAndGlyphs" xml:space="preserve">C</text>
<text x="1405.77" y="357.00" font-size="47" font-weight="400" fill="#000" textLength="32.50" lengthAdjust="spacingAndGlyphs" xml:space="preserve">D</text>
<text x="36.10" y="675.30" font-size="47" font-weight="400" fill="#000" textLength="24.83" lengthAdjust="spacingAndGlyphs" xml:space="preserve">2</text>
<text x="36.54" y="741.70" font-size="47" font-weight="400" fill="#1d6238" textLength="23.05" lengthAdjust="spacingAndGlyphs" xml:space="preserve">3</text>
<text x="34.92" y="809.20" font-size="47" font-weight="400" fill="#000" textLength="25.60" lengthAdjust="spacingAndGlyphs" xml:space="preserve">4</text>
<text x="37.36" y="876.20" font-size="47" font-weight="400" fill="#000" textLength="22.69" lengthAdjust="spacingAndGlyphs" xml:space="preserve">5</text>
<text x="35.77" y="942.90" font-size="47" font-weight="400" fill="#000" textLength="25.19" lengthAdjust="spacingAndGlyphs" xml:space="preserve">6</text>
<text x="292.07" y="418.70" font-size="32" font-weight="700" fill="#000" textLength="85.98" lengthAdjust="spacingAndGlyphs" xml:space="preserve">CODE</text>
<text x="757.14" y="418.70" font-size="32" font-weight="700" fill="#000" textLength="150.59" lengthAdjust="spacingAndGlyphs" xml:space="preserve">BARCODE</text>
<text x="219.79" y="580.00" font-size="37.7" font-weight="400" fill="#3c3c3c" textLength="231.27" lengthAdjust="spacingAndGlyphs" xml:space="preserve">29798665848</text>
<text x="674.65" y="583.40" font-size="46" font-weight="400" fill="#3c3c3c" textLength="317.47" lengthAdjust="spacingAndGlyphs" xml:space="preserve">(29798665848)</text>
<text x="131.49" y="972.80" font-size="19.5" font-weight="700" fill="#1e6e40" textLength="53.52" lengthAdjust="spacingAndGlyphs" xml:space="preserve">Sheet</text>
<text x="13.00" y="1007.80" font-size="15" font-weight="400" fill="#444444" textLength="43.15" lengthAdjust="spacingAndGlyphs" xml:space="preserve">Ready</text>
<text x="156.60" y="1008.00" font-size="15" font-weight="400" fill="#444444" textLength="168.66" lengthAdjust="spacingAndGlyphs" xml:space="preserve">Accessibility: Good to go</text>
<text x="1469.45" y="1008.00" font-size="15" font-weight="400" fill="#444444" textLength="40.45" lengthAdjust="spacingAndGlyphs" xml:space="preserve">230%</text></svg></body></html>
